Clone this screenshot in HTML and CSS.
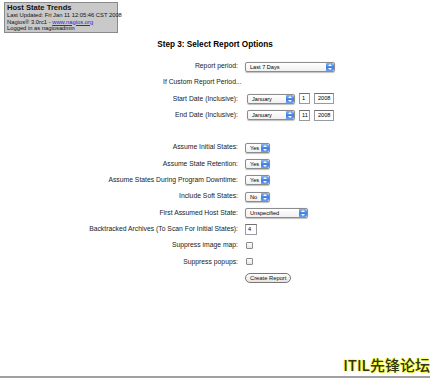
FILE: index.html
```html
<!DOCTYPE html>
<html>
<head>
    <title>Host State Trends</title>
    <link rel="stylesheet" href="styles.css">
</head>
<body>
    <div class="info-box">
        <div class="info-title">Host State Trends</div>
        <div>Last Updated: Fri Jan 11 12:05:46 CST 2008</div>
        <div>Nagios&reg; 3.0rc1 - <a href="#">www.nagios.org</a></div>
        <div>Logged in as nagiosadmin</div>
    </div>

    <h1 class="step-title">Step 3: Select Report Options</h1>

    <div class="options">
        <div class="label">Report period:</div>
        <div class="field"><div class="select w-period"><span>Last 7 Days</span><i class="arrow"></i></div></div>

        <div class="label custom">If Custom Report Period...</div>
        <div class="field"></div>

        <div class="label">Start Date (Inclusive):</div>
        <div class="field">
            <div class="select w-month"><span>January</span><i class="arrow"></i></div>
            <div class="text w-day">1</div>
            <div class="text w-year">2008</div>
        </div>

        <div class="label">End Date (Inclusive):</div>
        <div class="field">
            <div class="select w-month"><span>January</span><i class="arrow"></i></div>
            <div class="text w-day">11</div>
            <div class="text w-year">2008</div>
        </div>

        <div class="label"></div>
        <div class="field"></div>

        <div class="label">Assume Initial States:</div>
        <div class="field"><div class="select w-yes"><span>Yes</span><i class="arrow"></i></div></div>

        <div class="label">Assume State Retention:</div>
        <div class="field"><div class="select w-yes"><span>Yes</span><i class="arrow"></i></div></div>

        <div class="label">Assume States During Program Downtime:</div>
        <div class="field"><div class="select w-yes"><span>Yes</span><i class="arrow"></i></div></div>

        <div class="label">Include Soft States:</div>
        <div class="field"><div class="select w-yes"><span>No</span><i class="arrow"></i></div></div>

        <div class="label">First Assumed Host State:</div>
        <div class="field"><div class="select w-state"><span>Unspecified</span><i class="arrow"></i></div></div>

        <div class="label">Backtracked Archives (To Scan For Initial States):</div>
        <div class="field"><div class="text w-arch">4</div></div>

        <div class="label">Suppress image map:</div>
        <div class="field"><div class="check"></div></div>

        <div class="label">Suppress popups:</div>
        <div class="field"><div class="check"></div></div>

        <div class="label"></div>
        <div class="field"><div class="button">Create Report</div></div>
    </div>

    <div class="watermark">ITIL先锋论坛</div>
    <div class="bottom-line"></div>
</body>
</html>
```

FILE: styles.css
```css
body {
    margin: 0;
    width: 430px;
    height: 378px;
    background-color: #fff;
    color: #000;
    font-family: "Liberation Sans", Arial, sans-serif;
    font-size: 7px;
    position: relative;
    overflow: hidden;
}
.info-box {
    position: absolute;
    left: 4px;
    top: 2px;
    width: 108px;
    height: 29px;
    padding: 0 2px 0 2px;
    background-color: #c9c9c9;
    border: 1px solid #8a8a8a;
    font-size: 5.8px;
    line-height: 6.6px;
    color: #111;
    white-space: nowrap;
}
.info-title {
    font-weight: bold;
    font-size: 7.6px;
    line-height: 9px;
}
.info-box a {
    color: #2a2ad0;
    text-decoration: underline;
}
.step-title {
    margin: 0;
    padding-top: 39px;
    text-align: center;
    font-size: 8.2px;
    line-height: 12px;
    font-weight: bold;
}
.options {
    display: grid;
    grid-template-columns: 238px 1fr;
    grid-auto-rows: 16.3px;
    margin-top: 7px;
}
.label {
    text-align: right;
    line-height: 16.3px;
    color: #222;
    font-size: 6.8px;
    white-space: nowrap;
}
.label.custom {
    text-align: left;
    padding-left: 163px;
    width: 0;
}
.field {
    display: flex;
    align-items: center;
    gap: 4px;
    padding-left: 7px;
}
.select {
    position: relative;
    height: 8px;
    border: 1px solid #8c8c8c;
    border-radius: 2px;
    background: linear-gradient(#fff, #f0f0f0);
    font-size: 5.6px;
    line-height: 8px;
    padding-left: 4px;
    box-sizing: content-box;
    box-shadow: 0 0.5px 1px rgba(0,0,0,0.25);
}
.select span {
    display: block;
}
.arrow {
    position: absolute;
    right: 0;
    top: 0;
    width: 8px;
    height: 8px;
    border-radius: 0 2px 2px 0;
    background: linear-gradient(#8fb6ef, #3d7ee0 55%, #6aa2f0);
}
.arrow::before,
.arrow::after {
    content: "";
    position: absolute;
    left: 2px;
    border-left: 2px solid transparent;
    border-right: 2px solid transparent;
}
.arrow::before {
    top: 1px;
    border-bottom: 2px solid #fff;
}
.arrow::after {
    bottom: 1px;
    border-top: 2px solid #fff;
}
.w-period { width: 84px; margin-top: 1px; }
.w-month { width: 42px; margin-left: 2px; }
.w-yes { width: 19px; }
.w-state { width: 57px; }
.text {
    height: 9px;
    border: 1px solid #9a9a9a;
    border-top-color: #6f6f6f;
    font-size: 5.6px;
    line-height: 9px;
    padding-left: 2px;
    box-sizing: content-box;
    background: #fff;
}
.w-day { width: 7px; }
.w-year { width: 15px; padding-left: 3px; }
.w-arch { width: 8px; }
.check {
    width: 5px;
    height: 5px;
    border: 1px solid #8a8a8a;
    border-radius: 1px;
    background: linear-gradient(#fff, #e6e6e6);
    margin-left: 1px;
}
.button {
    height: 8px;
    padding: 0 4px;
    border: 1px solid #777;
    border-radius: 5px;
    background: linear-gradient(#fff, #e4e4e4);
    font-size: 5.8px;
    line-height: 8px;
    color: #111;
}
.watermark {
    position: absolute;
    right: 0;
    top: 356px;
    font-family: "Noto Sans CJK SC", sans-serif;
    font-size: 15px;
    line-height: 18px;
    font-weight: 500;
    color: #33331a;
    text-shadow: 0 0 1px #ff0, 1px 1px 1px #ffff50, -1px -1px 1px #ffff50;
}
.bottom-line {
    position: absolute;
    left: 0;
    right: 0;
    top: 376px;
    height: 2px;
    background: #a0a0a0;
}
```
